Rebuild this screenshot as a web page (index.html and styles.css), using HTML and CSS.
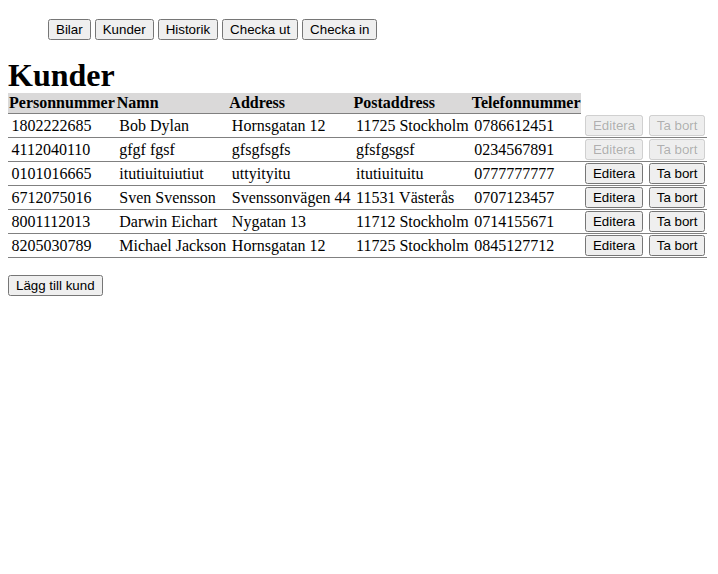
FILE: index.html
```html
<!DOCTYPE html>
<html lang="sv">
<head>
<meta charset="utf-8">
<title>Kunder</title>
<link rel="stylesheet" href="styles.css">
</head>
<body>
<nav class="nav">
  <button class="btn">Bilar</button>
  <button class="btn">Kunder</button>
  <button class="btn">Historik</button>
  <button class="btn">Checka ut</button>
  <button class="btn">Checka in</button>
</nav>
<h1 class="title">Kunder</h1>
<table class="customers">
  <thead>
    <tr>
      <th>Personnummer</th><th>Namn</th><th>Address</th><th>Postaddress</th><th>Telefonnummer</th>
    </tr>
  </thead>
  <tbody>
    <tr><td>1802222685</td><td>Bob Dylan</td><td>Hornsgatan 12</td><td>11725 Stockholm</td><td>0786612451</td><td><button class="btn" disabled>Editera</button></td><td><button class="btn" disabled>Ta bort</button></td></tr>
    <tr><td>4112040110</td><td>gfgf fgsf</td><td>gfsgfsgfs</td><td>gfsfgsgsf</td><td>0234567891</td><td><button class="btn" disabled>Editera</button></td><td><button class="btn" disabled>Ta bort</button></td></tr>
    <tr><td>0101016665</td><td>itutiuituiutiut</td><td>uttyityitu</td><td>itutiuituitu</td><td>0777777777</td><td><button class="btn">Editera</button></td><td><button class="btn">Ta bort</button></td></tr>
    <tr><td>6712075016</td><td>Sven Svensson</td><td>Svenssonvägen 44</td><td>11531 Västerås</td><td>0707123457</td><td><button class="btn">Editera</button></td><td><button class="btn">Ta bort</button></td></tr>
    <tr><td>8001112013</td><td>Darwin Eichart</td><td>Nygatan 13</td><td>11712 Stockholm</td><td>0714155671</td><td><button class="btn">Editera</button></td><td><button class="btn">Ta bort</button></td></tr>
    <tr><td>8205030789</td><td>Michael Jackson</td><td>Hornsgatan 12</td><td>11725 Stockholm</td><td>0845127712</td><td><button class="btn">Editera</button></td><td><button class="btn">Ta bort</button></td></tr>
  </tbody>
</table>
<div class="actions">
  <button class="btn">Lägg till kund</button>
</div>
</body>
</html>
```

FILE: styles.css
```css
body {
  margin: 8px;
  font-family: "Liberation Serif", "Times New Roman", serif;
  font-size: 16px;
  color: #000;
  background: #fff;
}
.nav {
  padding: 11px 0 0 40px;
}
.btn {
  font-family: "Liberation Sans", Arial, sans-serif;
  font-size: 13.333px;
}
.title {
  font-size: 32px;
  font-weight: bold;
  margin: 17px 0 0;
  line-height: 36px;
}
.customers {
  border-collapse: collapse;
}
.customers th {
  background: #dad9d9;
  text-align: left;
  padding: 1px;
  border-bottom: 1px solid #808080;
  white-space: nowrap;
}
.customers td {
  padding: 0 2px 0 3.5px;
  height: 23px;
  line-height: 18px;
  border-bottom: 1px solid #808080;
  white-space: nowrap;
}
.customers td .btn {
  vertical-align: middle;
}
.actions {
  margin-top: 17px;
}
```
